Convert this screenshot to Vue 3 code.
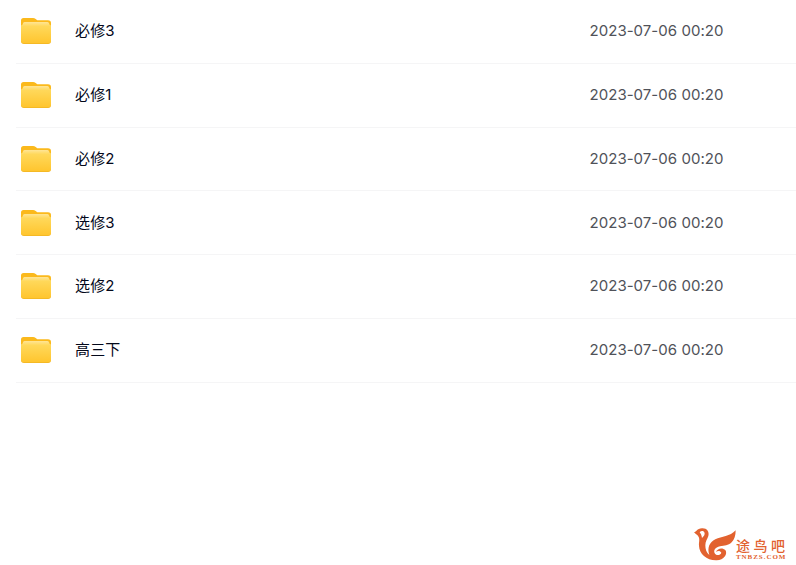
<script setup>
import { ref } from 'vue'

const pastas = ref([
  { nome: '必修3', data: '2023-07-06 00:20' },
  { nome: '必修1', data: '2023-07-06 00:20' },
  { nome: '必修2', data: '2023-07-06 00:20' },
  { nome: '选修3', data: '2023-07-06 00:20' },
  { nome: '选修2', data: '2023-07-06 00:20' },
  { nome: '高三下', data: '2023-07-06 00:20' }
])
</script>

<template>
  <main>
    <ul>
      <li v-for="pasta in pastas" :key="pasta.nome">
        <svg class="icone" viewBox="0 0 30 28" width="30" height="28">
          <defs>
            <linearGradient id="frente" x1="0" y1="0" x2="0" y2="1">
              <stop offset="0" stop-color="#ffe596" />
              <stop offset="0.2" stop-color="#ffd85a" />
              <stop offset="1" stop-color="#ffc52e" />
            </linearGradient>
          </defs>
          <path d="M0 3.5Q0 1 2.5 1H12Q13.5 1 14.7 2L16.3 3.2H27Q30 3.2 30 6V16H0Z" fill="#fbb91c" />
          <path d="M0 24V8.5Q1.9 8 1.9 6.5Q2 5 3.5 5H26.5Q28 5 28.1 6.5Q28.1 8 30 8.5V24Q30 27 27 27H3Q0 27 0 24Z" fill="#f2b522" />
          <path d="M0 23.5V8.5Q1.9 8 1.9 6.5Q2 5 3.5 5H26.5Q28 5 28.1 6.5Q28.1 8 30 8.5V23.5Q30 26.3 27 26.3H3Q0 26.3 0 23.5Z" fill="url(#frente)" />
        </svg>
        <span class="nome">{{ pasta.nome }}</span>
        <time>{{ pasta.data }}</time>
      </li>
    </ul>

    <footer>
      <svg class="passaro" viewBox="0 0 126 99" width="42" height="33">
        <path
          d="M0 13C8 12 8 2 24 1C38 0 47 11 43 24C40 33 34 40 34 52C34 64 37 74 46 81C39 60 46 43 64 34C83 25 108 26 125 7C125 24 121 34 113 43C102 54 92 52 78 55C63 58 57 68 63 77C68 84 80 81 82 74C78 68 72 68 66 72C70 60 86 58 94 66C102 78 90 96 68 97C38 98 16 78 15 54C14 42 18 36 14 27C11 20 5 19 0 13ZM17 13C21 18 23 23 24 30C30 25 34 19 31 13C28 8 21 8 17 13Z"
          fill="#e2622f"
          fill-rule="evenodd"
        />
      </svg>
      <div class="marca">
        <strong>途鸟吧</strong>
        <small>TNBZS.COM</small>
      </div>
    </footer>
  </main>
</template>

<style>
body {
  background: #fff;
}
</style>

<style scoped>
main {
  box-sizing: border-box;
  height: 565px;
  padding-left: 16px;
  display: flex;
  flex-direction: column;
  justify-content: space-between;
  overflow: hidden;
  font-family: Inter, "Noto Sans CJK SC", sans-serif;
}
ul {
  list-style: none;
  margin: 0;
  padding: 0;
}
li {
  box-sizing: border-box;
  height: 63.75px;
  display: flex;
  align-items: center;
  padding: 0 73px 0 5px;
  border-bottom: 1px solid #f5f5f6;
  font-size: 15px;
  line-height: 22px;
}
.icone {
  flex: none;
  margin-right: 24px;
}
.nome {
  flex: 1;
  color: #03081a;
  letter-spacing: 0.15px;
}
time {
  width: 133.5px;
  white-space: nowrap;
  color: #505259;
  letter-spacing: 0.04px;
}
footer {
  display: flex;
  align-self: flex-end;
  padding: 0 9px 4px 0;
  color: #e2622f;
}
.passaro {
  flex: none;
}
.marca {
  display: flex;
  flex-direction: column;
  width: 51px;
  padding-top: 10px;
  white-space: nowrap;
}
.marca strong {
  font-size: 14px;
  font-weight: 500;
  line-height: 15px;
  letter-spacing: 3.5px;
}
.marca small {
  font-family: "Liberation Serif", serif;
  font-size: 7px;
  font-weight: 700;
  line-height: 8px;
  letter-spacing: 0.95px;
}
</style>
